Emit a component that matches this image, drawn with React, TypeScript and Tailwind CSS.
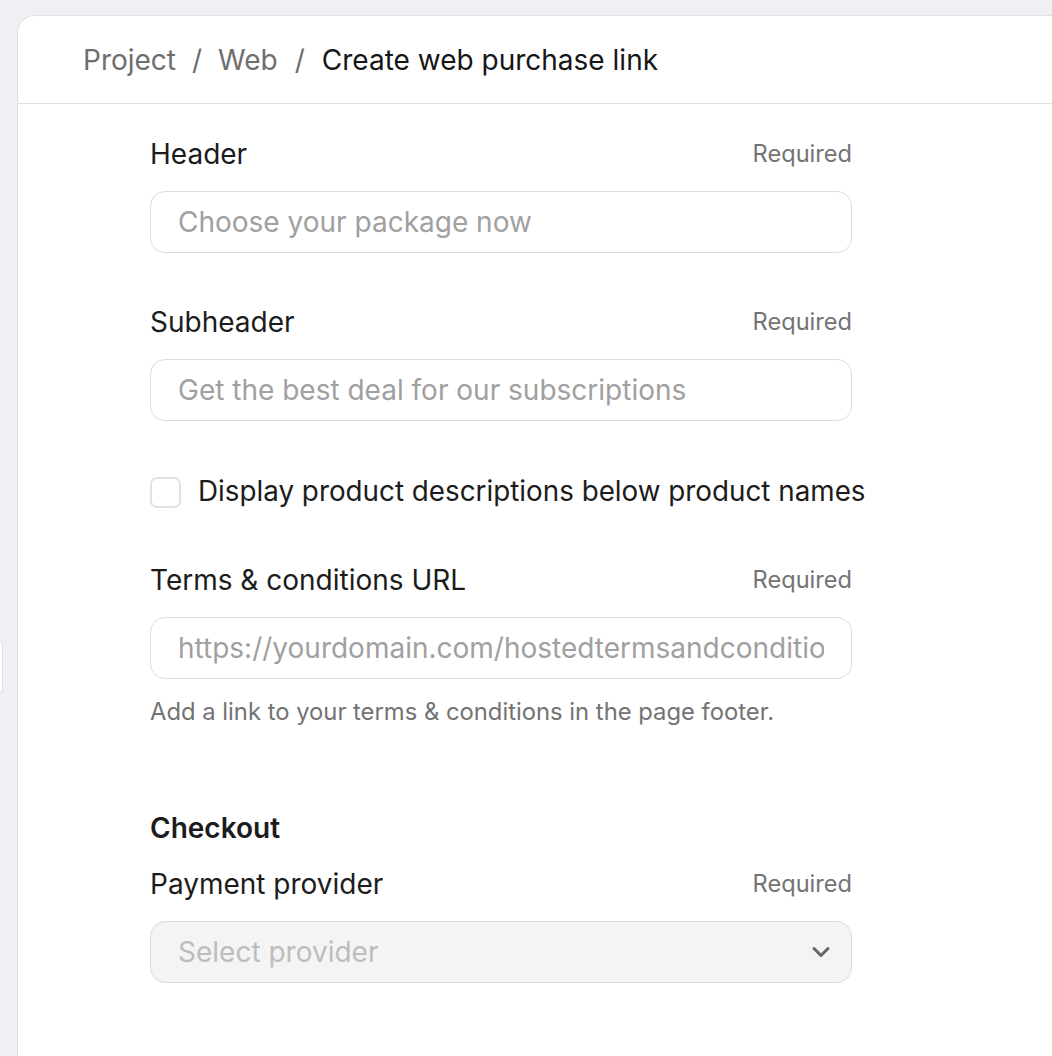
import React from 'react';
import { ChevronDown } from 'lucide-react';

const font = { fontFamily: 'Inter, "Noto Sans", sans-serif' };

function FieldLabel({ label }: { label: string }) {
  return (
    <div className="flex items-center justify-between h-9">
      <span className="text-[28px] text-[#1c1c1c]">{label}</span>
      <span className="text-[23.6px] text-[#737373]">Required</span>
    </div>
  );
}

function TextField({ label, placeholder }: { label: string; placeholder: string }) {
  return (
    <div>
      <FieldLabel label={label} />
      <input
        className="mt-[19px] block w-full h-[62px] rounded-[15px] border border-[#dcdcdc] bg-white px-[27px] text-[28px] text-[#1c1c1c] placeholder:text-[#a0a0a0] outline-none"
        placeholder={placeholder}
        style={font}
      />
    </div>
  );
}

export default function App() {
  return (
    <div className="relative min-h-screen bg-[#eef0f4] pl-[17px] pt-[15px]" style={font}>
      {/* edge of a panel peeking in from the left */}
      <div className="absolute left-0 top-[641px] w-[3px] h-[52px] bg-white rounded-r-[6px] border border-l-0 border-[#dcdfe4]" />

      <div className="min-h-[1041px] bg-white rounded-tl-[18px] border-l border-t border-[#e0e2e6]">
        <div className="h-[88px] flex items-center pl-[65px] border-b border-[#dedede] text-[28px]">
          <span className="text-[#6e6e6e]">Project</span>
          <span className="text-[#6e6e6e] mx-[16px]">/</span>
          <span className="text-[#6e6e6e]">Web</span>
          <span className="text-[#6e6e6e] mx-[17px]">/</span>
          <span className="text-[#161616]">Create web purchase link</span>
        </div>

        <div className="ml-[132px] w-[702px] pt-[32px]">
          <TextField label="Header" placeholder="Choose your package now" />

          <div className="mt-[51px]">
            <TextField label="Subheader" placeholder="Get the best deal for our subscriptions" />
          </div>

          <label className="mt-[53px] flex items-center h-9 gap-[17px] whitespace-nowrap">
            <span className="w-[31px] h-[31px] rounded-[7px] border-2 border-[#e2e2e2] bg-white shrink-0" />
            <span className="text-[27.8px] text-[#1c1c1c]">Display product descriptions below product names</span>
          </label>

          <div className="mt-[52px]">
            <TextField label="Terms & conditions URL" placeholder="https://yourdomain.com/hostedtermsandconditions" />
            <p className="mt-[18px] text-[23.8px] leading-[30px] text-[#737373] whitespace-nowrap">
              Add a link to your terms &amp; conditions in the page footer.
            </p>
          </div>

          <h3 className="mt-[83px] h-9 flex items-center text-[28px] font-semibold text-[#1c1c1c]">Checkout</h3>

          <div className="mt-[20px]">
            <FieldLabel label="Payment provider" />
            <div className="mt-[19px] h-[62px] rounded-[15px] border border-[#dcdcdc] bg-[#f4f4f4] pl-[27px] pr-[16px] flex items-center justify-between">
              <span className="text-[28px] text-[#bdbdbd]">Select provider</span>
              <ChevronDown size={28} strokeWidth={2.6} className="text-[#666666]" />
            </div>
          </div>
        </div>
      </div>
    </div>
  );
}
